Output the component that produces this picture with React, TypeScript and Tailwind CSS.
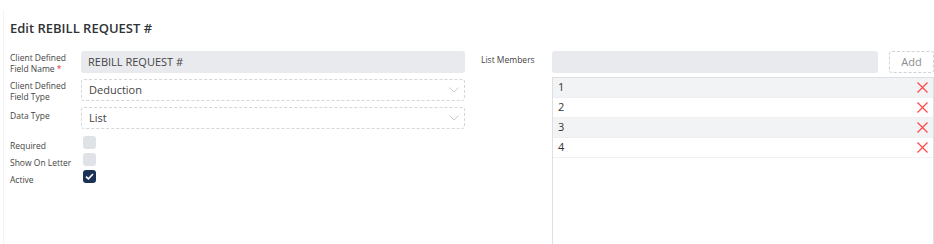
import React from "react";

const Chevron = () => (
  <svg width="10" height="6" viewBox="0 0 10 6" fill="none" stroke="#c8ccd2" strokeWidth="1">
    <path d="M0.5 0.5 L5 5 L9.5 0.5" />
  </svg>
);

const XIcon = () => (
  <svg width="11" height="11" viewBox="0 0 11 11" fill="none" stroke="#ff4a4a" strokeWidth="1.3">
    <path d="M0.5 0.5 L10.5 10.5 M10.5 0.5 L0.5 10.5" />
  </svg>
);

const Check = ({ checked }: { checked?: boolean }) =>
  checked ? (
    <div className="w-[13px] h-[13px] rounded-[3px] bg-[#1b3156] flex items-center justify-center">
      <svg width="9" height="7" viewBox="0 0 9 7" fill="none" stroke="#fff" strokeWidth="1.6">
        <path d="M1 3.6 L3.4 5.8 L8 1" />
      </svg>
    </div>
  ) : (
    <div className="w-[13px] h-[13px] rounded-[3px] bg-[#dfe2e6]" />
  );

const Label2 = ({ a, b }: { a: React.ReactNode; b: React.ReactNode }) => (
  <div className="w-[71px] text-[8.5px] text-[#444] flex flex-col pt-[2px]">
    <span className="leading-[11px] h-[11px]">{a}</span>
    <span className="leading-[11px] h-[11px]">{b}</span>
  </div>
);

export default function App() {
  const items = ["1", "2", "3", "4"];
  return (
    <div
      className="w-[934px] h-[244px] overflow-hidden bg-white text-[#333]"
      style={{ fontFamily: '"Open Sans", "Noto Sans", sans-serif' }}
    >
      <div className="ml-[3px] mt-[10px] border-l border-[#f3f3f3] h-[234px] pl-[6px]">
        <div className="pt-[10px] text-[13px] font-semibold leading-[16px] text-[#2f3336]">Edit REBILL REQUEST #</div>
        <div className="mt-[15px] flex">
          {/* left column */}
          <div className="w-[455px] flex flex-col">
            <div className="flex items-center h-[22px]">
              <Label2 a="Client Defined" b={<>Field Name <span className="text-[#d33]">*</span></>} />
              <div className="flex-1 h-[22px] rounded-[3px] bg-[#e8eaee] flex items-center px-[7px] text-[11px] text-[#444]">
                REBILL REQUEST #
              </div>
            </div>
            <div className="flex items-center h-[22px] mt-[6px]">
              <Label2 a="Client Defined" b="Field Type" />
              <div className="flex-1 h-[22px] rounded-[3px] border border-dashed border-[#d4d6da] flex items-center justify-between pl-[7px] pr-[5px] text-[11px] text-[#444]">
                <span>Deduction</span>
                <Chevron />
              </div>
            </div>
            <div className="flex items-center h-[22px] mt-[6px]">
              <div className="w-[71px] text-[8.5px] leading-[11px] text-[#444] self-start pt-[3px]">Data Type</div>
              <div className="flex-1 h-[22px] rounded-[3px] border border-dashed border-[#d4d6da] flex items-center justify-between pl-[7px] pr-[5px] text-[11px] text-[#444]">
                <span>List</span>
                <Chevron />
              </div>
            </div>
            <div className="flex flex-col mt-[7px] gap-[4px]">
              {[
                ["Required", false],
                ["Show On Letter", false],
                ["Active", true],
              ].map(([label, checked]) => (
                <div key={label as string} className="flex items-end h-[13px]">
                  <div className="w-[73px] text-[8.5px] leading-[11px] text-[#444] translate-y-[2px]">{label as string}</div>
                  <Check checked={checked as boolean} />
                </div>
              ))}
            </div>
          </div>
          {/* right column */}
          <div className="ml-[16px] flex-1 flex flex-col">
            <div className="flex items-start h-[22px]">
              <div className="w-[71px] text-[8.5px] leading-[11px] text-[#444] pt-[3px]">List Members</div>
              <div className="flex-1 h-[22px] rounded-[3px] bg-[#e8eaee]" />
              <div className="ml-[11px] w-[45px] h-[22px] rounded-[3px] border border-dashed border-[#d0d2d6] flex items-center justify-center text-[11px] text-[#8a8d91]">
                Add
              </div>
            </div>
            <div className="ml-[71px] mt-[4px] h-[200px] border border-[#dcdfe3] border-b-0">
              {items.map((it, i) => (
                <div
                  key={it}
                  className={`h-[20px] flex items-center justify-between pl-[5px] pr-[5px] text-[11px] text-[#333] border-b border-[#eef0f2] ${
                    i % 2 === 0 ? "bg-[#f2f3f5]" : "bg-white"
                  }`}
                >
                  <span>{it}</span>
                  <XIcon />
                </div>
              ))}
            </div>
          </div>
        </div>
      </div>
    </div>
  );
}
